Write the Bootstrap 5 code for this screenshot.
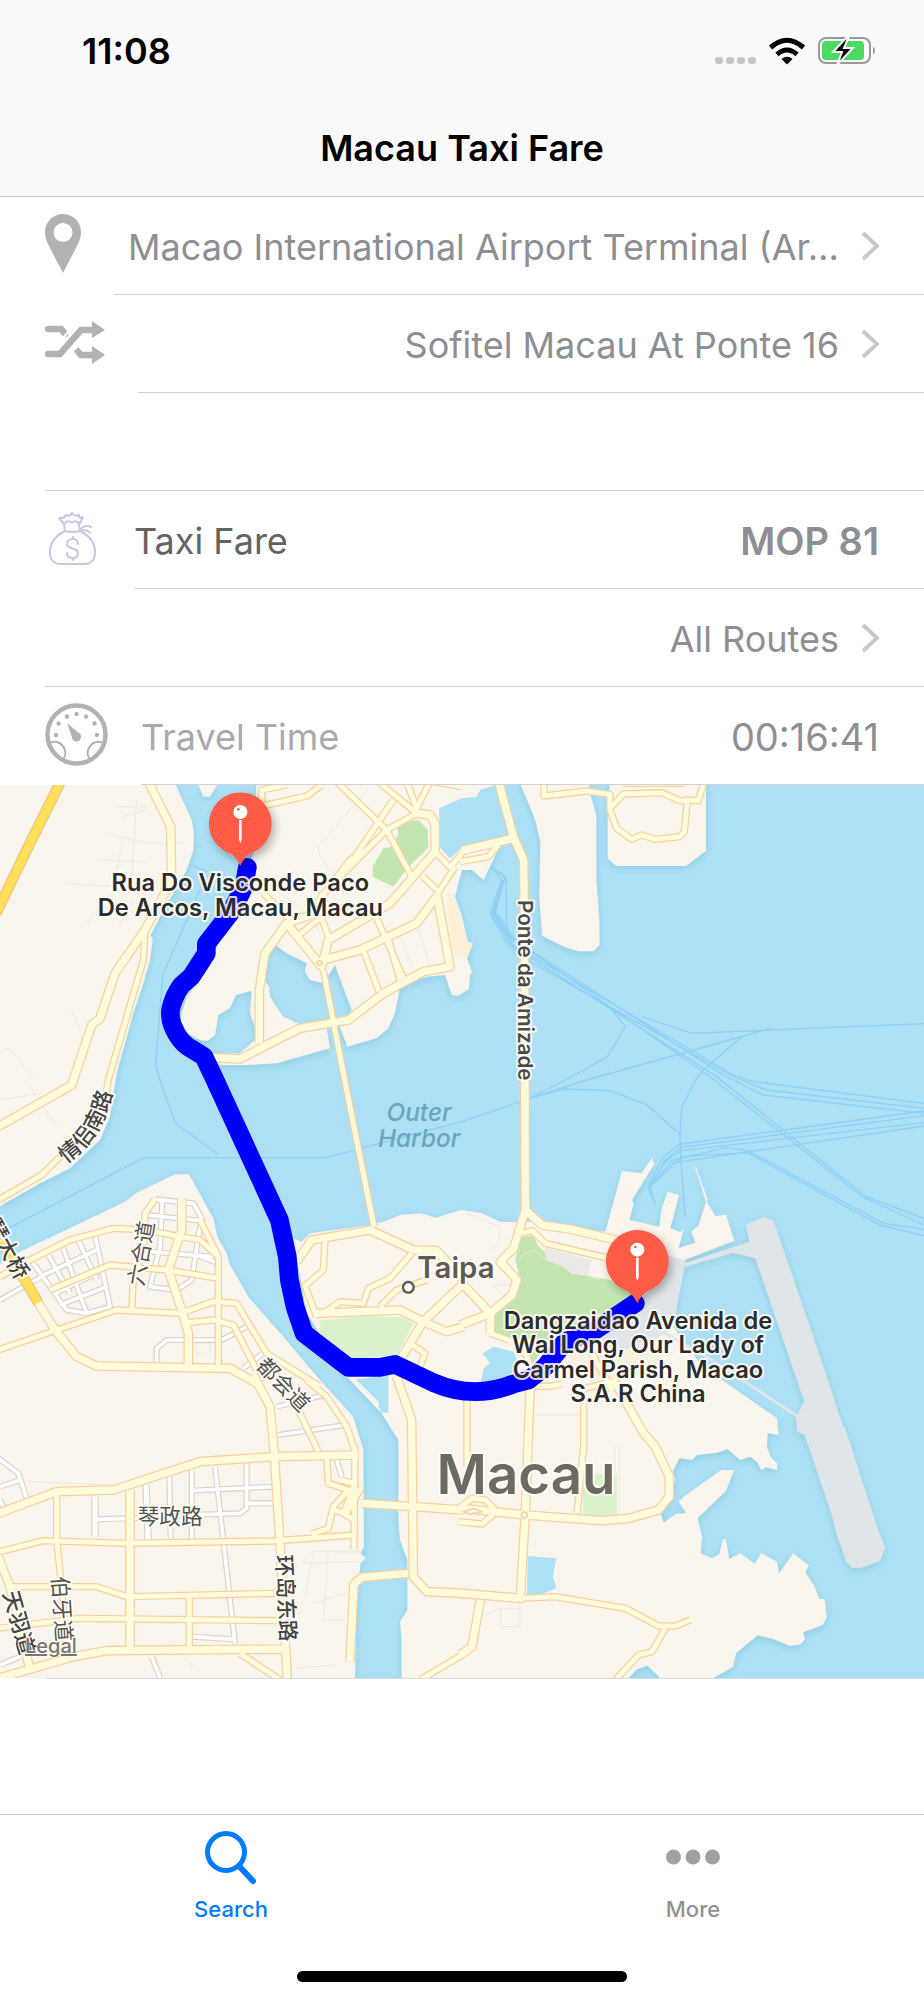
<!DOCTYPE html>
<html lang="en">
<head>
<meta charset="utf-8">
<meta name="viewport" content="width=device-width, initial-scale=1">
<title>Macau Taxi Fare</title>
<link href="https://cdn.jsdelivr.net/npm/bootstrap@5.3.0/dist/css/bootstrap.min.css" rel="stylesheet">
<style>
  body { font-family: Inter, "Noto Sans CJK SC", sans-serif; color: #000; background: #fff; font-size: 36px; line-height: 44px; }
  .top-area { background: #f9f9f9; border-bottom: 1px solid #c8c8c8; height: 197px; }
  .status-line { height: 102px; padding: 0 46px 0 82px; font-size: 36px; }
  .page-title { font-size: 36px; line-height: 44px; }
  .fare-row { height: 98px; padding-left: 45px; gap: 33px; color: #8e8e93; text-decoration: none; }
  .fare-row-body { border-bottom: 1px solid #d2d2d5; padding: 2px 45px 0 0; gap: 22px; min-width: 0; }
  a.fare-row:hover { background: #f4f4f6; }
  .pad-name { padding-left: 14px; }
  .name-dark { color: #636363; }
  .name-pale { color: #aaa; }
  .amount { font-size: 38px; }
  .map-legal { left: 25px; bottom: 20px; font-size: 20px; line-height: 24px; color: #77746f; text-shadow: 0 0 2px #fff, 0 0 2px #fff; }
  .map-end { border-top: 1px solid #dcdcde; margin-left: 45px; }
  .tab-strip { border-top: 1px solid #c4c4c4; height: 186px; }
  .tab-link { color: #929292; font-size: 22px; line-height: 28px; padding-top: 14px; gap: 10px; text-decoration: none; }
  .tab-link.active { color: #007aff; }
  .home-bar { width: 330px; height: 11px; background: #000; margin-bottom: 18px; }

  .ferry { fill: none; stroke: #8dcff6; stroke-width: 4; }
  .lot { fill: none; stroke: #ece7df; stroke-width: 3; }
  .land { fill: #f9f4ec; }
  .water { fill: #ade0f5; }
  .apron { fill: #e0e5ea; }
  .road-edge, .road-face { fill: none; stroke-linecap: butt; stroke-linejoin: round; }
  .road-face { stroke: #fdfbda; --edge: 0px; }
  .road-edge { stroke: #f6cf9e; --edge: 7px; }
  .road-edge.pale { stroke: #d8d3cb; }
  .road-face.pale { stroke: #fff; }
  .w1 { stroke-width: calc(11px + var(--edge)); }
  .w2 { stroke-width: calc(15px + var(--edge)); }
  .w3 { stroke-width: calc(22px + var(--edge)); }
  .map-text { paint-order: stroke; stroke: #fffdf8; stroke-opacity: .85; stroke-width: 12px; stroke-linejoin: round; font-family: Inter, "Noto Sans CJK SC", sans-serif; }
  .pin-text { font-size: 71px; font-weight: 600; fill: #2b2b2b; text-anchor: middle; }
  .street { font-size: 65px; fill: #55534e; }
  .street-main { font-size: 65px; fill: #444; font-weight: 500; }
</style>
</head>
<body class="d-flex flex-column min-vh-100">

<header class="top-area">
  <div class="status-line d-flex align-items-center justify-content-between">
    <span class="fw-semibold">11:08</span>
    <svg width="163" height="30" viewBox="0 0 163 30" aria-hidden="true">
      <g fill="#c7c7c7"><rect x="0" y="21" width="8" height="7" rx="3"/><rect x="11" y="21" width="8" height="7" rx="3"/><rect x="22" y="21" width="8" height="7" rx="3"/><rect x="33" y="21" width="8" height="7" rx="3"/></g>
      <g fill="none" stroke="#000" stroke-width="5"><path d="M55.500 11.500Q72 -3 88.500 11.500"/><path d="M62 18.500Q72 9.500 82 18.500"/></g>
      <path d="M66.500 23Q72 18.500 77.500 23L72 28.500Z"/>
      <rect x="104" y="2" width="51" height="25" rx="7" fill="#f9f9f9" stroke="#999" stroke-width="2"/>
      <rect x="107" y="5" width="42" height="19" rx="4" fill="#4cd964"/>
      <path d="M158 10.500q4 4 0 8z" fill="#999"/>
      <path d="M133 0L118 16h9l-5 13 16-17h-9l5-12z" fill="#000" stroke="#f9f9f9" stroke-width="2"/>
    </svg>
  </div>
  <div class="d-flex justify-content-center pt-4">
    <h1 class="page-title fw-semibold m-0">Macau Taxi Fare</h1>
  </div>
</header>

<main>
  <a href="#from" class="fare-row d-flex">
    <svg class="flex-shrink-0 align-self-center" width="36" height="64" viewBox="0 0 36 64" aria-hidden="true"><path fill="#b2b2b2" fill-rule="evenodd" d="M18 0C28 0 36 8 36 18C36 24 34 28 32 32L18 59L4 32C2 28 0 24 0 18C0 8 8 0 18 0ZM18 9a9.500 9.500 0 1 0 0 19a9.500 9.500 0 1 0 0-19Z"/></svg>
    <span class="fare-row-body pad-name d-flex flex-grow-1 align-items-center justify-content-between">
      <span class="text-nowrap">Macao International Airport Terminal (Ar…</span>
      <svg class="flex-shrink-0" width="18" height="30" viewBox="0 0 18 30" aria-hidden="true"><path d="M2 1L16 14L2 27" fill="none" stroke="#c7c7cc" stroke-width="4"/></svg>
    </span>
  </a>
  <a href="#to" class="fare-row d-flex">
    <svg class="flex-shrink-0 align-self-center" width="60" height="46" viewBox="0 0 60 46" aria-hidden="true"><g fill="none" stroke="#b2b2b2" stroke-width="6.500"><path d="M3 8h13l4 5" stroke-linecap="round"/><path d="M3 33h12L36 9h12" stroke-linecap="round"/><path d="M30 27l6 7h12"/></g><path fill="#b2b2b2" d="M47 0L60 9L47 17ZM47 25L60 34L47 43Z"/><path d="M17 18l7-8M26 32l8-8" stroke="#fff" stroke-width="2"/></svg>
    <span class="fare-row-body d-flex flex-grow-1 align-items-center justify-content-end">
      <span>Sofitel Macau At Ponte 16</span>
      <svg class="flex-shrink-0" width="18" height="30" viewBox="0 0 18 30" aria-hidden="true"><path d="M2 1L16 14L2 27" fill="none" stroke="#c7c7cc" stroke-width="4"/></svg>
    </span>
  </a>
  <div class="fare-row d-flex"><div class="fare-row-body flex-grow-1"></div></div>
  <div class="fare-row d-flex">
    <svg class="flex-shrink-0 align-self-center" width="56" height="56" viewBox="0 0 56 56" fill="none" stroke="#c6c8e0" stroke-width="2" stroke-linejoin="round" stroke-linecap="round" aria-hidden="true">
      <path d="M20 19C12 23 5 30 5 40C5 49 9 52 17 52H39C47 52 50 48 50 40C50 30 43 23 35 19Q27 21 20 19L19 12L14 6Q19 7 21 3Q25 5 27 1Q30 5 34 3Q34 7 38 5L34 13L35 19"/>
      <path d="M19 12q4-5 8-1q4-4 7 1M35 18q5-6 11-3M36 19q6-2 9 2"/>
      <path d="M33 32c0-4-3-5-5-5c-4 0-6 2-6 5c0 6 11 3 11 9c0 3-2 5-5 5c-4 0-6-2-6-5M28 25v2M28 46v2"/>
    </svg>
    <div class="fare-row-body d-flex flex-grow-1 align-items-center justify-content-between">
      <span class="name-dark">Taxi Fare</span><span class="amount fw-semibold">MOP 81</span>
    </div>
  </div>
  <a href="#routes" class="fare-row d-flex">
    <span class="fare-row-body d-flex flex-grow-1 align-items-center justify-content-end">
      <span>All Routes</span>
      <svg class="flex-shrink-0" width="18" height="30" viewBox="0 0 18 30" aria-hidden="true"><path d="M2 1L16 14L2 27" fill="none" stroke="#c7c7cc" stroke-width="4"/></svg>
    </span>
  </a>
  <div class="fare-row d-flex">
    <svg class="flex-shrink-0 align-self-center" width="63" height="66" viewBox="0 0 63 66" aria-hidden="true">
      <g fill="none" stroke="#b2b2b2"><circle cx="31.500" cy="31.500" r="29" stroke-width="4.500"/><path stroke-width="2" d="M5 40C14 35 25 46 18 57M58 40C49 35 38 46 45 57"/></g>
      <g fill="#b2b2b2"><circle cx="31.500" cy="34" r="4.500"/><path d="M22 20L36 32L28 37Z"/><circle cx="11" cy="32" r="2.200"/><circle cx="13.500" cy="20.500" r="2.200"/><circle cx="22" cy="13.500" r="2.200"/><circle cx="31.500" cy="11" r="2.200"/><circle cx="41" cy="13.500" r="2.200"/><circle cx="49.500" cy="20.500" r="2.200"/><circle cx="52" cy="32" r="2.200"/></g>
    </svg>
    <div class="fare-row-body d-flex flex-grow-1 align-items-center justify-content-between">
      <span class="name-pale">Travel Time</span><span class="amount">00:16:41</span>
    </div>
  </div>

  <section class="position-relative" aria-label="Route map">
    <svg class="d-block w-100 h-auto" viewBox="0 15 2772 2679" role="img" aria-label="Map of Macau with the taxi route">
      <defs>
        <filter id="shore" x="-5%" y="-5%" width="110%" height="110%"><feDropShadow dx="0" dy="8" stdDeviation="12" flood-color="#6fbcd6" flood-opacity=".5"/></filter>
        <filter id="pinShade" x="-30%" y="-30%" width="160%" height="160%"><feDropShadow dx="8" dy="12" stdDeviation="12" flood-color="#000" flood-opacity=".3"/></filter>
        <g id="whiteRoads">
          <g transform="translate(0,900)"><path class="w1" d="M0 660L125 590M100 550L200 690L260 700L330 680L285 465M145 525L210 640M190 505L260 700M235 480L290 600M120 590L290 510M165 640L300 575M180 675L320 620M465 358L580 370L608 420L600 440L575 600L530 630L450 620L480 500L487 355M440 405L600 422M450 515L640 530M470 845V805L500 780H665L750 735M730 865L790 820M590 525L650 548"/></g>
          <g transform="translate(0,1800)"><path class="w1" d="M-5 235L55 280L80 355M0 320L60 300M0 360L12 385M290 418L390 415L560 405L720 400L740 385V250M575 332L820 320M745 370H820M508 290L512 475M645 260L705 790M575 770L705 778M830 80L975 45M835 165L1035 135M455 830L480 893M0 855L60 830M1010 240L1025 290M575 270V490M780 0L820 -30"/><path class="w2" d="M285 350V470M438 315L445 490"/></g>
        </g>
        <g id="yellowRoads">
          <path class="w2" d="M435 450L430 540L325 900L310 990L250 1080L180 1130L125 1185L-5 1260M780 80L920 48L965 15M785 100V30L860 15M1010 5L1160 150L1235 290M1180 60L1065 230L1050 240L950 370M1135 5L1250 100L1160 150L960 350M1220 5L1250 85L1290 5M1300 5L1386 20M970 570L1035 905L1122 1340M985 470L960 400M890 470L960 415M790 340L870 420M1090 510L1137 635M1130 415L1215 605M1160 460L1200 600M1270 290L1310 330M1386 220L1350 262L1305 215M1495 195L1465 230L1380 245M1365 260L1310 345"/>
          <path class="w2" d="M1632 5V48L1760 33L1830 43V90L1850 145L1895 178L1925 165L1965 178L2040 170L2053 155L2062 60L2095 62L2112 5M1835 80L1870 42L1985 38L2040 62H2065M1870 10H2055"/>
          <path class="w3" d="M445 5L512 140L515 300L435 450L345 580L300 715L275 735L215 915L-5 1040M1250 100L1290 105L1305 130V215L1240 290L1170 370L985 480L965 560L860 430L795 520L778 630V790M1310 340L1350 560L1270 575L1150 640L1045 720L900 745L810 790L720 837L640 833M970 540L1080 510L1250 430L1310 350M860 430L930 405M1540 175L1386 212M1496 5L1540 170L1571 240L1573 400L1576 1300"/>
          <g transform="translate(0,900)">
            <path class="w2" d="M0 590L100 535L210 480L340 445L440 450L540 470L600 480L655 530V860M150 630L330 555L500 570L655 595M465 358L435 400L430 500L400 600L395 690M-5 810L170 750L350 690L540 700L640 665L710 670L800 820L960 920M560 728L640 720L700 735L770 870M600 420L655 530M975 480L970 570L915 618L950 710M970 700L1020 665L1090 670L1105 625L1170 595L1235 520M1140 680L1190 630L1280 600M1230 790L1275 820L1260 860"/>
            <path class="w3" d="M545 355V450L505 570L545 690L565 760V860M60 580L165 750L230 830L290 858L690 865L780 915M890 545L935 480L1110 450L1240 510L1310 512L1390 600M950 700L1200 690L1270 725L1340 755L1390 740M1390 610L1270 725L1200 840"/>
          </g>
          <g transform="translate(1386,900)">
            <path class="w2" d="M180 460L210 452L250 490L440 535M85 760L140 780M390 820L450 930M180 800L200 840"/>
            <path class="w3" d="M190 390L240 435L330 448L480 485M190 390L155 505L115 545L165 600L150 645L85 700V760M0 610L85 700L-5 735"/>
          </g>
          <g transform="translate(0,1800)">
            <path class="w2" d="M0 515L130 482L380 490L820 483L1060 465M170 340V480L185 620L200 800M20 620H290L380 650L830 640M-5 745L240 715L830 722M568 650V800M720 820L840 900M895 90L955 215M920 0L980 50L1040 140L1065 210L1062 510M980 230L985 310L1045 330L1000 380L985 445L935 462M1085 320L1040 400L1000 390M1062 420L1030 400L1065 310L1020 300M1395 820L1260 900"/>
            <path class="w3" d="M-5 400L170 335L340 330L600 245L820 230L1075 225M390 330V810M-5 895L220 830L320 812L860 807M-5 530L30 620L90 870M760 -15L810 80L822 210L840 490L862 900M1085 370L1240 380L1390 390M1190 -10L1235 120L1240 590L1280 635L1390 640M1225 580L1085 592L1062 612L1050 845"/>
          </g>
          <g transform="translate(1386,1800)">
            <path class="w2" d="M15 50V260M365 60V200L345 400M205 20L270 18L300 12M370 25L450 5M175 655L280 650L490 685L590 738H640L685 720M610 745L570 815L530 825L460 900M-10 385L30 355L70 360L105 395L60 432L-10 425"/>
            <path class="w3" d="M205 10L190 400L175 655L0 640M0 385L190 405L420 422L500 415L590 390L622 350V290L580 200L545 160L455 0M55 660L30 800L-5 825"/>
          </g>
        </g>
      </defs>

      <rect class="water" y="15" width="2772" height="2679"/>
      <g class="land" filter="url(#shore)">
        <path d="M0 0H520L550 65L575 120L582 165L580 210L560 270L520 340L480 410L465 440L452 465L458 480L450 540L430 610L400 700L375 790L350 880L330 1010L300 1080L210 1165L120 1210L0 1278Z"/>
        <path d="M595 15L610 50H630L652 15Z"/>
        <path d="M0 1452L60 1415L240 1330L375 1265L410 1238L525 1183H567L640 1315L652 1370L680 1420L690 1455L745 1550L850 1670L960 1800L1060 1910L1090 2010L1092 2300L1082 2320L1097 2335L1082 2348L1070 2450L1065 2710H0Z"/>
        <path d="M770 0L760 220L720 330L650 500L600 600L560 650L540 720L560 760L600 780L622 783L645 765L655 705L690 685L708 645L755 632L750 700L765 740V780L720 820L640 822L660 855L740 855L830 850L990 805L980 745L910 738L848 708L810 650L808 620L795 605L800 520L826 495L860 520L920 550L915 575L930 600L965 608L990 580L1005 555L1055 690L1020 740L1042 800L1130 775L1165 745L1185 700L1200 620L1280 590L1335 585L1355 645L1375 648L1406 628L1411 580L1418 582L1401 535L1419 490L1404 487L1386 410L1365 350L1375 310L1386 270L1416 270L1451 300L1491 215L1470 180L1520 160L1500 0Z"/>
        <path d="M1556 0L1606 120L1621 185L1618 350L1626 467L1691 500L1736 514H1781L1799 495L1798 420L1789 300V105L1771 45L1766 0Z"/>
        <path d="M1831 0L1823 90V235L1848 258H2058L2118 212V0Z"/>
        <path d="M880 1375L905 1385L930 1360L1110 1335L1150 1325L1200 1305L1260 1300L1310 1313L1350 1300L1386 1290L1446 1300L1501 1325H1600L1816 1355L1866 1172L1924 1180L1956 1135L1963 1152L1896 1260L1901 1270L1889 1320L1978 1340L1984 1290L2003 1235L2037 1245L2011 1345L2041 1357L2051 1348L2036 1405L2086 1388L2074 1355L2096 1335L2118 1265L2085 1162L2088 1162L2123 1258L2122 1268L2146 1308L2178 1304L2203 1382L2054 1440L2020 1640L2100 1750L2166 1800L2331 1915L2336 1965L2303 1960L2301 2000L2311 2030L2331 2050V2070L2298 2062L2284 2070L2271 2045L2251 2030L2221 2040L2183 2008L2151 2018L2091 2025L2076 2040L2038 2035L2018 2075L2026 2100L2006 2170L1981 2200L1991 2228L2026 2203L2058 2198L2036 2165L2051 2150L2163 2070H2202L2178 2132L2093 2215L2106 2270L2102 2320L2136 2335L2158 2323L2169 2277H2177L2188 2336L2221 2320L2264 2351L2284 2320L2331 2345L2337 2380L2380 2320L2426 2356L2416 2377L2441 2415L2459 2457H2474L2480 2510L2469 2535L2410 2557L2415 2578L2401 2593L2370 2598L2321 2578L2273 2566L2208 2620L2198 2662L2141 2693L2130 2710H1995L1966 2680L1943 2657L1911 2668L1870 2710H1205V2580L1200 2525L1222 2490V2340L1200 2280L1195 2220V1980L1145 1900L1040 1790L920 1600L895 1460Z"/>
      </g>
      <g class="apron">
        <path d="M2006 1425L2058 1442L2026 1600L1996 1660L1940 1690L1840 1720L1760 1680L1900 1560Z"/>
        <path filter="url(#shore)" d="M2056 1450L2248 1385L2238 1335L2291 1310L2321 1323L2484 1800L2529 1940H2534L2631 2240L2656 2303L2639 2343L2586 2363H2554L2539 2345L2509 2260L2494 2200L2414 1965L2391 1955L2388 1912L2413 1865L2391 1800L2266 1435L2198 1418L2056 1460Z"/>
      </g>
      <path d="M1986 1655L2120 1730L2391 1908" fill="none" stroke="#e0e5ea" stroke-width="9"/>
      <g class="water">
        <path d="M1318 85L1386 55L1430 50L1440 30L1486 15L1525 162L1386 203L1350 235L1318 200Z"/>
        <path d="M1583 2328L1669 2335L1659 2390L1669 2425L1626 2442L1581 2448Z"/>
        <path d="M1060 1800L1165 1785V1898H1145L1130 1870Z"/>
        <path d="M1440 1815L1452 1765L1470 1750L1448 1720L1480 1700L1540 1715L1560 1760L1500 1810Z"/>
      </g>
      <path d="M1060 1795L1133 1868V1880" fill="none" stroke="#f9f4ec" stroke-width="7"/>
      <path fill="#c3e6b1" d="M1190 130L1255 120L1283 150L1285 205L1225 260L1180 320L1118 290V260L1150 205L1180 200L1195 160ZM1561 1370L1601 1368L1616 1400L1716 1480L1830 1500L1906 1550L1686 1660L1596 1750L1576 1700L1526 1670L1481 1660L1476 1610L1551 1540L1561 1500L1546 1440Z"/>
      <path fill="#d9f2cc" d="M960 1622L1090 1608L1210 1612L1240 1630L1190 1730L1050 1735L960 1670ZM1749 2083H1851V2210H1749Z"/>
      <path fill="#ebe9e6" d="M1636 1403L1776 1440L1761 1488L1746 1478L1716 1484L1700 1460L1636 1440Z"/>
      <path fill="#faf0d8" d="M1340 335L1362 345L1404 487L1419 490L1401 535L1355 520Z"/>
      <path fill="#f7f0df" d="M1700 1700L1930 1710L2010 1760L1850 1800H1720Z"/>

      <path class="lot" d="M350 80H440M365 110L440 90M320 160L440 190H550M370 170L330 380M300 240L440 245M195 310L350 320M410 60L395 290M260 430L300 380L430 400M355 440L400 360M215 690L240 745M-5 820L30 805L105 900M1105 25L955 200L960 230L1010 290M1190 445L1240 570M1255 445L1290 560M0 960L120 940M90 920L170 1040M80 2105L340 2115M905 2350L940 2315H1080M940 2315L915 2450M910 2350L1080 2345M985 2310L970 2520H1030M935 2470L1040 2440M890 2665L1010 2655M560 2640L590 2670M580 1690H630V1720H590ZM1605 1905H1740M1845 2000V2200M1858 2000V2200M1560 2485H1500L1450 2510M1502 2485V2540H1560V2475M1400 1300L1498 1340V1390L1470 1410M1560 1430L1600 1410L1640 1440L1800 1500M1480 1515H1540L1510 1550Z"/>

      <g class="ferry">
        <path d="M575 255L620 275M600 330L488 585L467 855L480 900L525 1028L653 1123M25 1345L432 1133H978L1386 1025L1590 955L1696 900L1822 830L1876 740L1836 690M1590 955L1760 900L2231 768L2311 745M1590 955L1690 927L1830 932L1940 974L2040 1063L2042 1130L2056 1315M1926 710L2076 760L2772 731M2225 770L2110 870L2087 900L2046 980L2040 1063"/>
        <path d="M1470 260L1515 290L1485 400L1530 490L1590 525L2200 885L2260 905L2772 970M1480 265L1505 300L1470 400L1525 495L1600 550L2190 885L2300 930L2772 985M1500 275L1518 300L1520 460L1560 490L2170 885L2290 945L2772 1000M1510 300L1475 405L1540 500L2150 890L2598 1250L2772 1315M1490 400L1550 485L2130 890L2590 1252L2772 1335"/>
        <path stroke-width="8" d="M1508 300L1480 400L1540 485"/>
        <path d="M1966 1275L1944 1220L1990 1130L2042 1092L2772 993M1966 1275L1950 1225L1995 1140L2045 1102L2772 1007M1950 1215L2000 1140L2045 1112L2772 1028M1950 1220L2045 1130L2243 1118L2640 1335L2772 1367M2000 1145L2180 1102L2245 1113L2650 1330L2772 1348M1950 1220L2010 1150L2772 1038"/>
      </g>

      <use href="#whiteRoads" class="road-edge pale"/>
      <use href="#whiteRoads" class="road-face pale"/>
      <use href="#yellowRoads" class="road-edge"/>
      <use href="#yellowRoads" class="road-face"/>
      <g fill="none">
        <path d="M182 5L80 210L-12 400M-15 1350L115 1568" stroke="#f0c184" stroke-width="33"/>
        <path d="M182 5L80 210L-12 400M-15 1350L115 1568" stroke="#ffe05a" stroke-width="26"/>
      </g>
      <g fill="#f9f4ec" stroke="#f6cf9e" stroke-width="4"><circle cx="1573" cy="2205" r="9"/><circle cx="959" cy="549" r="7"/><path d="M1392 2195L1420 2185L1445 2195L1410 2202Z"/></g>

      <g class="map-text">
        <path id="coastStreet" d="M198 1150Q322 1070 345 890" fill="none" stroke="none"/>
        <text class="street-main"><textPath href="#coastStreet">情侣南路</textPath></text>
        <text class="street-main" text-anchor="middle" transform="translate(20,1408) rotate(61)" dy="20">琴大桥</text>
        <text class="street" transform="translate(430,1520) rotate(-80)">六合道</text>
        <text class="street" transform="translate(766,1760) rotate(46)">都会道</text>
        <text class="street" x="413" y="2232">琴政路</text>
        <text class="street-main" transform="translate(828,2326) rotate(87)">环岛东路</text>
        <text class="street" transform="translate(156,2391) rotate(86)">伯牙道</text>
        <text class="street-main" transform="translate(8,2440) rotate(74)">天羽道</text>
        <text font-size="62" font-weight="600" fill="#4a4a4a" transform="translate(1554,360) rotate(90)">Ponte da Amizade</text>
        <text font-size="88" font-weight="600" fill="#5d5a55" x="1252" y="1493">Taipa</text>
        <text font-size="164" font-weight="600" fill="#6d6963" text-anchor="middle" x="1578" y="2141">Macau</text>
      </g>
      <g font-size="73" font-style="italic" font-weight="500" fill="#6aa6be" text-anchor="middle" font-family="Inter, sans-serif">
        <text x="1257" y="1022">Outer</text><text x="1257" y="1100">Harbor</text>
      </g>
      <circle cx="1225" cy="1522" r="16" fill="#fff" stroke="#5d5a55" stroke-width="7"/>

      <path d="M742 262C735 300 735 320 720 345L690 400L619 492V520L574 590L545 615C525 640 511 680 511 700C511 740 540 790 575 807L612 830L645 900L838 1320L862 1430L868 1500L885 1580L912 1660L1045 1762H1140L1185 1753L1300 1808Q1420 1860 1540 1812L1586 1800L1636 1760L1696 1685L1786 1650L1906 1570" fill="none" stroke="#00f" stroke-width="56" stroke-linejoin="round" stroke-linecap="round"/>

      <g id="pinStart">
        <path filter="url(#pinShade)" fill="#ff5b47" d="M721 257C713 240 705 230 690 220A94 94 0 1 1 752 220C737 230 729 240 721 257Z"/>
        <circle cx="721" cy="96" r="21" fill="#fff"/><circle cx="715" cy="88" r="4" fill="#ff5b47"/><path d="M717 120H725V178L721 190L717 178Z" fill="#fff"/>
      </g>
      <use href="#pinStart" x="1191" y="1313"/>

      <g class="map-text pin-text">
        <text x="721" y="333">Rua Do Visconde Paco</text>
        <text x="721" y="407">De Arcos, Macau, Macau</text>
        <text x="1914" y="1646">Dangzaidao Avenida de</text>
        <text x="1914" y="1719">Wai Long, Our Lady of</text>
        <text x="1914" y="1793">Carmel Parish, Macao</text>
        <text x="1914" y="1867">S.A.R China</text>
      </g>
    </svg>
    <a href="#legal" class="map-legal position-absolute fw-medium">Legal</a>
  </section>
  <div class="map-end"></div>
</main>

<footer class="tab-strip mt-auto d-flex flex-column justify-content-between">
  <nav class="row g-0 text-center" aria-label="Tabs">
    <a href="#search" class="tab-link active col d-flex flex-column align-items-center" aria-current="page">
      <svg width="54" height="56" viewBox="0 0 54 56" fill="none" stroke="#007aff" aria-hidden="true"><circle cx="22" cy="23" r="18.500" stroke-width="5"/><path d="M35 37L49 52" stroke-width="6" stroke-linecap="round"/></svg>
      <span class="fw-medium">Search</span>
    </a>
    <a href="#more" class="tab-link col d-flex flex-column align-items-center">
      <svg width="54" height="56" viewBox="0 0 54 56" fill="#a0a0a0" aria-hidden="true"><circle cx="7.500" cy="28" r="7.500"/><circle cx="27" cy="28" r="7.500"/><circle cx="46.500" cy="28" r="7.500"/></svg>
      <span class="fw-medium">More</span>
    </a>
  </nav>
  <div class="home-bar rounded-pill align-self-center"></div>
</footer>

<script src="https://cdn.jsdelivr.net/npm/bootstrap@5.3.0/dist/js/bootstrap.bundle.min.js"></script>
</body>
</html>
